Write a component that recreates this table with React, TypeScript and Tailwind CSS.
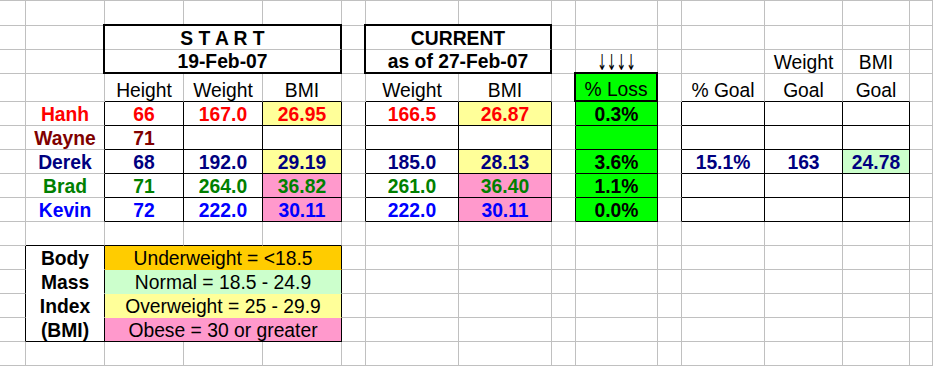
import React from "react";

// one cell of the sheet; r / b pick the right and bottom border
type Cell = {
  t?: string;
  span?: 1 | 2 | 3;
  r?: keyof typeof R;
  b?: keyof typeof B;
  c?: string;
};

const R = {
  g: "border-r border-r-[#c0c0c0]",
  k: "border-r border-r-black",
  K: "border-r-2 border-r-black",
};

const B = {
  g: "border-b border-b-[#c0c0c0]",
  k: "border-b border-b-black",
  K: "border-b-2 border-b-black",
  w: "border-b border-b-white",
  o: "border-b border-b-[#ffcc00]",
  l: "border-b border-b-[#ccffcc]",
  y: "border-b border-b-[#ffff99]",
};

const SPAN = { 1: "", 2: "col-span-2", 3: "col-span-3" };

// thick box edges drawn onto the neighbour cells (left + top)
const boxTL = "shadow-[-2px_0_0_0_#000,0_-2px_0_0_#000,-2px_-2px_0_0_#000]";
const boxL = "shadow-[-2px_0_0_0_#000]";

const YEL = "bg-[#ffff99]";
const PINK = "bg-[#ff99cc]";
const LIME = "bg-[#00ff00]";

const people = [
  { name: "Hanh", color: "text-[#ff0000]", h: "66", w: "167.0", bmi: "26.95", bg: YEL, cw: "166.5", cb: "26.87", cbg: YEL, loss: "0.3%" },
  { name: "Wayne", color: "text-[#800000]", h: "71", w: "", bmi: "", bg: "", cw: "", cb: "", cbg: "", loss: "" },
  { name: "Derek", color: "text-[#000080]", h: "68", w: "192.0", bmi: "29.19", bg: YEL, cw: "185.0", cb: "28.13", cbg: YEL, loss: "3.6%" },
  { name: "Brad", color: "text-[#008000]", h: "71", w: "264.0", bmi: "36.82", bg: PINK, cw: "261.0", cb: "36.40", cbg: PINK, loss: "1.1%" },
  { name: "Kevin", color: "text-[#0000ff]", h: "72", w: "222.0", bmi: "30.11", bg: PINK, cw: "222.0", cb: "30.11", cbg: PINK, loss: "0.0%" },
];

const legend = [
  { label: "Body", text: "Underweight = <18.5", bg: "bg-[#ffcc00]", b: "o" as const },
  { label: "Mass", text: "Normal = 18.5 - 24.9", bg: "bg-[#ccffcc]", b: "l" as const },
  { label: "Index", text: "Overweight = 25 - 29.9", bg: "bg-[#ffff99]", b: "y" as const },
  { label: "(BMI)", text: "Obese = 30 or greater", bg: "bg-[#ff99cc]", b: "k" as const },
];

function fill(cells: Record<number, Cell>): Cell[] {
  const out: Cell[] = [];
  let i = 0;
  while (i < 15) {
    const cell = cells[i] || {};
    out.push(cell);
    i += cell.span || 1;
  }
  return out;
}

const k = { r: "k" as const, b: "k" as const };

const rows: Cell[][] = [
  fill({}),
  fill({
    2: { t: "S T A R T", span: 3, r: "K", c: "font-bold " + boxTL },
    6: { t: "CURRENT", span: 2, r: "K", c: "font-bold " + boxTL },
  }),
  fill({
    2: { t: "19-Feb-07", span: 3, r: "K", b: "K", c: "font-bold " + boxL },
    6: { t: "as of 27-Feb-07", span: 2, r: "K", b: "K", c: "font-bold " + boxL },
    9: { t: "↓↓↓↓", c: "arrows" },
    12: { t: "Weight" },
    13: { t: "BMI" },
  }),
  fill({
    2: { t: "Height", b: "k" },
    3: { t: "Weight", b: "k" },
    4: { t: "BMI", b: "k" },
    6: { t: "Weight", b: "k" },
    7: { t: "BMI", b: "k" },
    9: { t: "% Loss", r: "K", b: "K", c: LIME + " " + boxTL },
    11: { t: "% Goal", b: "k" },
    12: { t: "Goal", b: "k" },
    13: { t: "Goal", b: "k" },
  }),
  ...people.map((p) =>
    fill({
      1: { t: p.name, r: "k", c: "font-bold " + p.color },
      2: { t: p.h, ...k, c: "font-bold " + p.color },
      3: { t: p.w, ...k, c: "font-bold " + p.color },
      4: { t: p.bmi, ...k, c: "font-bold " + p.color + " " + p.bg },
      5: { r: "k" },
      6: { t: p.cw, ...k, c: "font-bold " + p.color },
      7: { t: p.cb, ...k, c: "font-bold " + p.color + " " + p.cbg },
      8: { r: "k" },
      9: { t: p.loss, ...k, c: "font-bold text-black " + LIME },
      10: { r: "k" },
      11: { t: p.name === "Derek" ? "15.1%" : "", ...k, c: "font-bold text-[#000080]" },
      12: { t: p.name === "Derek" ? "163" : "", ...k, c: "font-bold text-[#000080]" },
      13: {
        t: p.name === "Derek" ? "24.78" : "",
        ...k,
        c: "font-bold text-[#000080] " + (p.name === "Derek" ? "bg-[#ccffcc]" : ""),
      },
    })
  ),
  fill({ 1: { b: "k" }, 2: { b: "k" }, 3: { b: "k" }, 4: { b: "k" } }),
  ...legend.map((l, i) =>
    fill({
      0: { r: "k" },
      1: { t: l.label, r: "k", b: i === 3 ? "k" : "w", c: "font-bold" },
      2: { t: l.text, span: 3, r: "k", b: l.b, c: l.bg },
    })
  ),
  fill({}),
];

export default function App() {
  return (
    <div className="w-[933px] h-[366px] bg-white overflow-hidden font-['Liberation_Sans',Arial,sans-serif] text-[19.3px] text-black">
      <div className="grid grid-cols-[26px_79px_79px_79px_79px_24px_93px_93px_24px_82px_24px_83px_78px_67px_23px] grid-rows-[25px_24px_24px_28px_24px_24px_24px_24px_24px_24px_24px_24px_24px_24px_24px] border-t border-t-[#c0c0c0]">
        {rows.map((row, ri) =>
          row.map((cell, ci) => (
            <div
              key={ri + "-" + ci}
              className={[
                "flex items-end justify-center leading-[20px] whitespace-nowrap min-w-0",
                R[cell.r || "g"],
                B[cell.b || "g"],
                SPAN[cell.span || 1],
                cell.c === "arrows" ? "" : cell.c || "",
              ].join(" ")}
            >
              {cell.c === "arrows" ? (
                <span className="inline-block font-['DejaVu_Sans',sans-serif] text-[11.5px] leading-[9px] text-black scale-y-[1.9] origin-bottom mb-[1px]">
                  {cell.t}
                </span>
              ) : (
                cell.t
              )}
            </div>
          ))
        )}
      </div>
    </div>
  );
}
